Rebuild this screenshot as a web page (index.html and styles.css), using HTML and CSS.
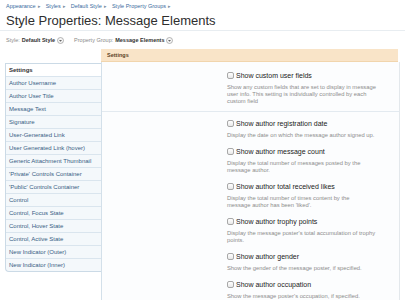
FILE: index.html
```html
<!DOCTYPE html>
<html lang="en">
<head>
  <meta charset="UTF-8">
  <meta name="viewport" content="width=device-width, initial-scale=1.0">
  <title>Style Properties: Message Elements</title>
  <link rel="stylesheet" href="styles.css">
</head>
<body>
  <div class="title-bar">
    <nav class="breadcrumb">
      <a href="#">Appearance</a><span class="arrow">&#9656;</span>
      <a href="#">Styles</a><span class="arrow">&#9656;</span>
      <a href="#">Default Style</a><span class="arrow">&#9656;</span>
      <a href="#">Style Property Groups</a><span class="arrow">&#9656;</span>
    </nav>
    <h1>Style Properties: Message Elements</h1>
  </div>

  <div class="chooser">
    <span class="muted">Style:</span> <b>Default Style</b>
    <svg class="drop" width="7" height="7" viewBox="0 0 7 7"><circle cx="3.5" cy="3.5" r="3" fill="#f6f6f6" stroke="#9a9a9a" stroke-width="0.7"/><path d="M2 3 L5 3 L3.5 4.8 Z" fill="#666"/></svg>
    <span class="muted group-label">Property Group:</span> <b>Message Elements</b>
    <svg class="drop" width="7" height="7" viewBox="0 0 7 7"><circle cx="3.5" cy="3.5" r="3" fill="#f6f6f6" stroke="#9a9a9a" stroke-width="0.7"/><path d="M2 3 L5 3 L3.5 4.8 Z" fill="#666"/></svg>
  </div>

  <div class="main">
    <ul class="prop-nav">
      <li class="head">Settings</li>
      <li><a href="#">Author Username</a></li>
      <li><a href="#">Author User Title</a></li>
      <li><a href="#">Message Text</a></li>
      <li><a href="#">Signature</a></li>
      <li><a href="#">User-Generated Link</a></li>
      <li><a href="#">User Generated Link (hover)</a></li>
      <li><a href="#">Generic Attachment Thumbnail</a></li>
      <li><a href="#">'Private' Controls Container</a></li>
      <li><a href="#">'Public' Controls Container</a></li>
      <li><a href="#">Control</a></li>
      <li><a href="#">Control, Focus State</a></li>
      <li><a href="#">Control, Hover State</a></li>
      <li><a href="#">Control, Active State</a></li>
      <li><a href="#">New Indicator (Outer)</a></li>
      <li><a href="#">New Indicator (Inner)</a></li>
    </ul>

    <div class="panel">
      <h3 class="panel-head">Settings</h3>
      <div class="panel-body">
        <div class="group">
          <div class="item">
            <label class="opt"><input type="checkbox"> Show custom user fields</label>
            <p class="hint">Show any custom fields that are set to display in message<br>user info. This setting is individually controlled by each<br>custom field</p>
          </div>
        </div>
        <div class="group">
          <div class="item">
            <label class="opt"><input type="checkbox"> Show author registration date</label>
            <p class="hint">Display the date on which the message author signed up.</p>
          </div>
          <div class="item">
            <label class="opt"><input type="checkbox"> Show author message count</label>
            <p class="hint">Display the total number of messages posted by the<br>message author.</p>
          </div>
          <div class="item">
            <label class="opt"><input type="checkbox"> Show author total received likes</label>
            <p class="hint">Display the total number of times content by the<br>message author has been 'liked'.</p>
          </div>
          <div class="item">
            <label class="opt"><input type="checkbox"> Show author trophy points</label>
            <p class="hint">Display the message poster's total accumulation of trophy<br>points.</p>
          </div>
          <div class="item">
            <label class="opt"><input type="checkbox"> Show author gender</label>
            <p class="hint">Show the gender of the message poster, if specified.</p>
          </div>
          <div class="item">
            <label class="opt"><input type="checkbox"> Show author occupation</label>
            <p class="hint">Show the message poster's occupation, if specified.</p>
          </div>
        </div>
      </div>
    </div>
  </div>
</body>
</html>
```

FILE: styles.css
```css
body {
  font-family: "Liberation Sans", Arial, sans-serif;
  margin: 0;
  background-color: #fff;
  color: #333;
}
a {
  text-decoration: none;
}
.title-bar {
  padding: 2px 6px 0;
  border-bottom: 1px solid #e8edf1;
}
.breadcrumb {
  font-size: 5.5px;
  line-height: 8px;
  height: 8px;
}
.breadcrumb a {
  color: #3a6a9e;
}
.breadcrumb .arrow {
  color: #7a8ea3;
  font-size: 4.5px;
  margin: 0 3.5px 0 2px;
}
.title-bar h1 {
  margin: 2px 0 0;
  font-size: 13px;
  font-weight: normal;
  line-height: 18px;
  color: #2e2e2e;
}
.chooser {
  margin-top: 5px;
  padding-left: 6px;
  font-size: 5.5px;
  line-height: 8px;
  display: flex;
  align-items: center;
  gap: 2px;
}
.chooser .muted {
  color: #8a8a8a;
}
.chooser b {
  color: #333;
}
.chooser .group-label {
  margin-left: 8px;
}
.drop {
  display: block;
}

.main {
  display: flex;
  margin-top: 5px;
  padding: 0 5px;
}
.prop-nav {
  list-style: none;
  margin: 14px 0 0;
  padding: 0;
  width: 95px;
  align-self: flex-start;
  border: 1px solid #cbdae6;
  border-right: none;
  border-radius: 0 0 0 4px;
  background-color: #f4f8fb;
  font-size: 6px;
}
.prop-nav li {
  height: 12px;
  line-height: 12px;
  padding-left: 3px;
  border-bottom: 1px solid #dae5ee;
  white-space: nowrap;
}
.prop-nav li:last-child {
  border-bottom: none;
}
.prop-nav li.head {
  background-color: #fff;
  font-weight: bold;
  color: #333;
}
.prop-nav a {
  color: #375d84;
}

.panel {
  flex: 1;
}
.panel-head {
  margin: 0 2px 0 0;
  height: 12px;
  line-height: 12px;
  padding-left: 6px;
  font-size: 5.5px;
  color: #5c4126;
  background-color: #f9e4c8;
  border-bottom: 1px solid #f1d5ad;
}
.panel-body {
  border-left: 1px solid #d3e0ea;
  border-right: 1px solid #e3e8ec;
  background-color: #fcfdfe;
  height: 300px;
}
.group {
  padding: 8px 0 7.5px 125px;
  border-bottom: 1px solid #e3eaf0;
}
.group:first-child {
  padding-bottom: 6.5px;
}
.group + .group {
  padding-top: 6px;
}
.item {
  margin-bottom: 7.5px;
}
.group:first-child .item {
  margin-bottom: 0;
}
.opt {
  display: flex;
  align-items: center;
  height: 10px;
  font-size: 7px;
  color: #222;
  white-space: nowrap;
}
.opt input {
  appearance: none;
  width: 7px;
  height: 7px;
  margin: 0 2px 0 0;
  border: 1px solid #a8a8a8;
  border-radius: 2px;
  background: linear-gradient(#fff, #e9e9e9);
}
.hint {
  margin: 3.5px 0 0;
  font-size: 5.8px;
  line-height: 7px;
  color: #8c8c8c;
  white-space: nowrap;
}
```
